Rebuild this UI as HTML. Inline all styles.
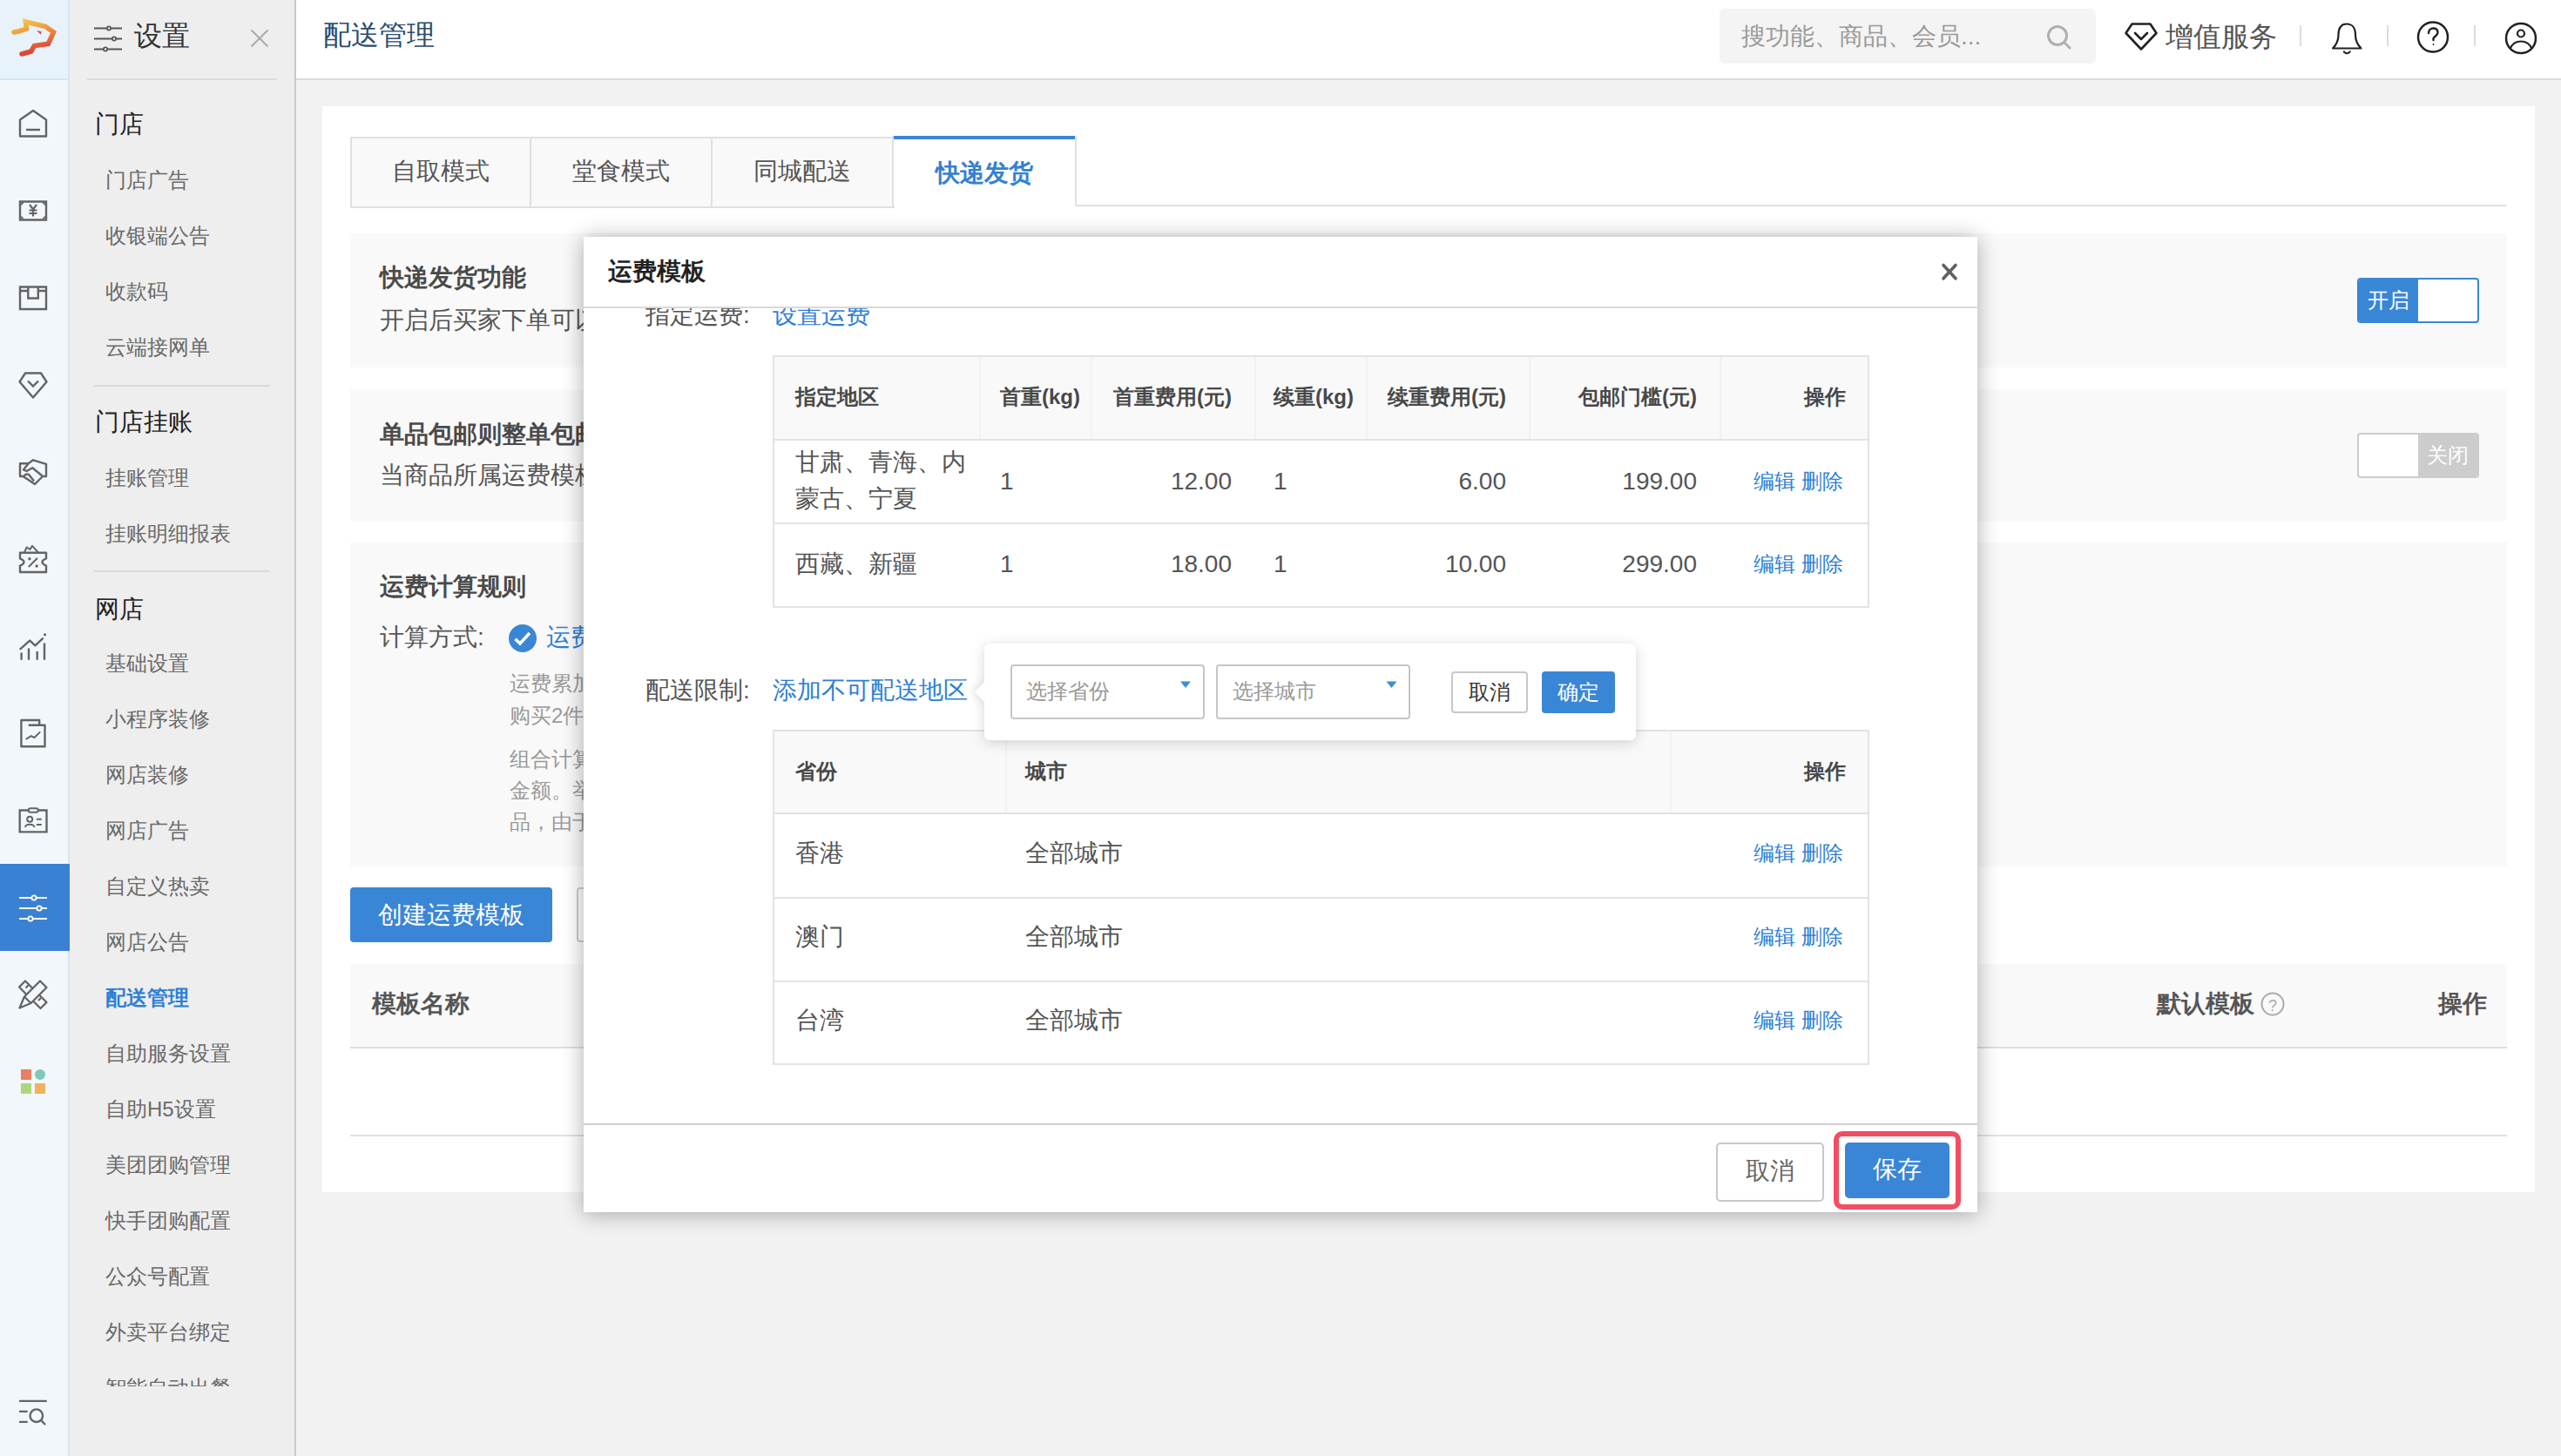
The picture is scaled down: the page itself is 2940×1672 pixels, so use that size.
<!DOCTYPE html>
<html><head><meta charset="utf-8">
<style>
html,body{margin:0;padding:0;}
body{width:2940px;height:1672px;overflow:hidden;background:#f2f2f2;font-family:"Liberation Sans",sans-serif;position:relative;}
.a{position:absolute;white-space:nowrap;}
.f24{font-size:24px;line-height:24px;}
.f28{font-size:28px;line-height:28px;}
.f32{font-size:32px;line-height:32px;}
.b{font-weight:bold;}
.blue{color:#2f7fd6;}
svg{position:absolute;overflow:visible;}
/* rail */
#rail{left:0;top:0;width:78px;height:1672px;background:#f2f7fc;border-right:2px solid #d4e5f5;}
#logo{left:0;top:0;width:78px;height:90px;background:#e7f2fa;border-bottom:2px solid #d4e5f5;}
/* sidebar */
#side{left:80px;top:0;width:258px;height:1672px;background:#eeeeee;border-right:2px solid #c9c9c9;}
.grp{left:109px;color:#222;}
.itm{left:121px;color:#6a6a6a;}
.dv{left:108px;width:202px;height:2px;background:#dadada;}
/* top */
#top{left:340px;top:0;width:2600px;height:90px;background:#fff;border-bottom:2px solid #dcdcdc;}
</style></head><body>
<div id="rail" class="a"></div>
<div id="logo" class="a"></div>
<div id="side" class="a"></div>
<div id="top" class="a"></div>

<svg style="left:0;top:0" width="80" height="92" viewBox="0 0 80 92">
<defs><linearGradient id="lg" x1="0" y1="0" x2="0.3" y2="1"><stop offset="0" stop-color="#f6c846"/><stop offset="0.5" stop-color="#ee8b3c"/><stop offset="1" stop-color="#df4338"/></linearGradient></defs>
<path d="M16 37 C20 36.5 24.5 35 30.5 32.8 L29.3 25 L52 30.3 L61.5 37 L55.3 50.4 L39.4 52.5 L35.6 59 L25 62" fill="none" stroke="url(#lg)" stroke-width="5.6" stroke-linejoin="miter" stroke-miterlimit="6" stroke-linecap="round"/>
<path d="M41.8 34.8 L47.8 36.6 L46.8 39.8 Z" fill="#e8404f"/>
</svg>
<div class="a" style="left:0;top:992px;width:80px;height:100px;background:#3a80d3"></div>
<svg style="left:0;top:0" width="80" height="1672" viewBox="0 0 80 1672" fill="none" stroke="#646464" stroke-width="2.4">
<!-- home -->
<path d="M23 156.5 V137.5 L38 127 L53 137.5 V156.5 Z" stroke-linejoin="round"/><path d="M30 149 H46"/>
<!-- yen bill -->
<path d="M23 231.5 H53 V252.5 H23 Z"/>
<path d="M23 235 A3.5 3.5 0 0 0 26.5 231.5 M49.5 231.5 A3.5 3.5 0 0 0 53 235 M53 249 A3.5 3.5 0 0 0 49.5 252.5 M26.5 252.5 A3.5 3.5 0 0 0 23 249" stroke-width="1.8"/>
<path d="M34 235 L38 240.5 L42 235 M38 240.5 V248.5 M33.5 241.5 H42.5 M33.5 245 H42.5" stroke-width="2.2"/>
<!-- box -->
<path d="M23 329.5 H53 V355 H23 Z M23 334 H32.3 M43.8 334 H53 M32.3 329.5 V342.5 H43.8 V329.5"/>
<!-- diamond -->
<path d="M29 428.5 H47 L53.5 438.5 L38 456.5 L22.5 438.5 Z" stroke-linejoin="round"/><path d="M32 437.5 L38 443.5 L44 437.5"/>
<!-- handshake -->
<path d="M23 532.3 H32.5 L38 528.3 L53 532.8 V547 H49 L40 556 L26.5 547 H23 Z" stroke-linejoin="round"/>
<path d="M32.5 532.3 L27 539.5 L30.5 541 L37.3 537.3 L48.5 546.5" stroke-linejoin="round"/>
<path d="M27.5 546.5 C29 544.5 31 544 33 544.8 L39 552.5" stroke-linejoin="round"/>
<!-- discount ticket -->
<path d="M23 634.8 H53 V641.4 C49.5 643 48.5 644 48.5 645.5 C48.5 647 49.5 648 53 649.7 V657 H23 V649.7 C26.5 648 27.5 647 27.5 645.5 C27.5 644 26.5 643 23 641.4 Z" stroke-linejoin="round"/>
<path d="M28 634 L30.8 628.5 L34.5 631 L37 626.8 L43.5 634" stroke-width="2" stroke-linejoin="round"/>
<path d="M43 640.7 L32.8 651" stroke-width="2"/><circle cx="33.9" cy="641.8" r="1.7" fill="#646464" stroke="none"/><circle cx="42.1" cy="650" r="1.7" fill="#646464" stroke="none"/>
<!-- chart -->
<path d="M24.6 757.7 V749.6 M33 757.7 V744.6 M42.7 757.7 V748 M51 757.7 V738.5"/><path d="M22.7 745.8 L34.2 735.6 L40.4 741.3 L49.6 732.7" stroke-linejoin="round"/><circle cx="51.5" cy="728.8" r="1.6" fill="#646464" stroke="none"/>
<!-- report -->
<path d="M24.4 827 H45.2 V832.7 H51.5 V857.3 H24.4 Z M32.7 832.7 H45.2" stroke-linejoin="round"/><path d="M29.8 849 L35.6 845.2 L39.4 847 L46.2 840.4" stroke-width="2" stroke-linejoin="round"/>
<!-- id card -->
<path d="M22.7 930.5 H53.5 V955.4 H22.7 Z"/><rect x="32.7" y="928.3" width="11.1" height="4.4" rx="2.2" stroke-width="2" fill="#f2f7fc"/><circle cx="34.2" cy="940.8" r="3" stroke-width="2"/><path d="M28.8 950 C30 945.8 38.4 945.8 39.6 950 M41.9 940.8 H47.7 M41.9 947 H47.7" stroke-width="2"/>
<!-- pencil ruler -->
<path d="M29 1126.5 L53.5 1151 L46.5 1158 L22 1133.5 Z" stroke-linejoin="round" stroke-width="2.3"/>
<path d="M29.5 1134.5 L32.5 1131.5 M44 1149 L47 1146" stroke-width="2.2"/>
<path d="M46 1126.5 L53.5 1134 L35.5 1152 L22.5 1157.5 L28 1144.5 Z" fill="#f2f7fc" stroke-linejoin="round" stroke-width="2.3"/>
<path d="M28 1144.5 L35.5 1152" stroke-width="2.2"/>
<!-- search list -->
<path d="M22 1608.9 H53.8 M22 1620.9 H31.7 M22 1632.9 H31.7"/><circle cx="41.8" cy="1625.7" r="7.3"/><path d="M47.2 1631.1 L52 1636"/>
</svg>
<svg style="left:0;top:0" width="80" height="1672" viewBox="0 0 80 1672" fill="none" stroke="#fff" stroke-width="2.2">
<path d="M22 1031 H54 M22 1043 H54 M22 1055 H54"/>
<circle cx="39" cy="1031" r="2.6" fill="#3a80d3" stroke-width="1.8"/><circle cx="45" cy="1043" r="2.6" fill="#3a80d3" stroke-width="1.8"/><circle cx="35" cy="1055" r="2.6" fill="#3a80d3" stroke-width="1.8"/>
</svg>
<div class="a" style="left:24px;top:1228px;width:12px;height:12px;background:#e9805f"></div>
<div class="a" style="left:40px;top:1228px;width:12px;height:12px;background:#7ec9b7;border-radius:50%"></div>
<div class="a" style="left:24px;top:1244px;width:12px;height:12px;background:#acd87c"></div>
<div class="a" style="left:40px;top:1244px;width:12px;height:12px;background:#f1b15e"></div>


<svg style="left:0;top:0" width="340" height="92" viewBox="0 0 340 92" fill="none" stroke="#555" stroke-width="2.5">
<path d="M108 32.5 H140 M108 44.5 H140 M108 56.5 H140" stroke-width="2.2"/>
<circle cx="125" cy="32.5" r="2.1" fill="#eee" stroke-width="1.7"/><circle cx="131" cy="44.5" r="2.1" fill="#eee" stroke-width="1.7"/><circle cx="121" cy="56.5" r="2.1" fill="#eee" stroke-width="1.7"/>
<path d="M288.5 34.5 L307.5 53.5 M307.5 34.5 L288.5 53.5" stroke="#aaa" stroke-width="2"/>
</svg>
<div class="a f32" style="left:154px;top:25px;color:#333">设置</div>
<div class="a dv" style="top:90px;left:100px;width:218px"></div>

<div class="a f28 grp" style="top:129px">门店</div>
<div class="a f28 grp" style="top:471px">门店挂账</div>
<div class="a f28 grp" style="top:686px">网店</div>
<div class="a dv" style="top:442px"></div><div class="a dv" style="top:655px"></div>
<div class="a f24 itm" style="top:195px">门店广告</div>
<div class="a f24 itm" style="top:259px">收银端公告</div>
<div class="a f24 itm" style="top:323px">收款码</div>
<div class="a f24 itm" style="top:387px">云端接网单</div>
<div class="a f24 itm" style="top:537px">挂账管理</div>
<div class="a f24 itm" style="top:601px">挂账明细报表</div>
<div class="a f24 itm" style="top:750px">基础设置</div>
<div class="a f24 itm" style="top:814px">小程序装修</div>
<div class="a f24 itm" style="top:878px">网店装修</div>
<div class="a f24 itm" style="top:942px">网店广告</div>
<div class="a f24 itm" style="top:1006px">自定义热卖</div>
<div class="a f24 itm" style="top:1070px">网店公告</div>
<div class="a f24 itm b" style="top:1134px;color:#2f7fd6">配送管理</div>
<div class="a f24 itm" style="top:1198px">自助服务设置</div>
<div class="a f24 itm" style="top:1262px">自助H5设置</div>
<div class="a f24 itm" style="top:1326px">美团团购管理</div>
<div class="a f24 itm" style="top:1390px">快手团购配置</div>
<div class="a f24 itm" style="top:1454px">公众号配置</div>
<div class="a f24 itm" style="top:1518px">外卖平台绑定</div>
<div class="a" style="left:80px;top:1520px;width:258px;height:72px;overflow:hidden"><div class="a f24 itm" style="left:41px;top:62px">智能自动出餐</div></div>

<div class="a f32" style="left:371px;top:24px;color:#2b4d70">配送管理</div>
<div class="a" style="left:1974px;top:10px;width:432px;height:63px;background:#f4f4f4;border-radius:6px"></div>
<div class="a f28" style="left:1999px;top:28px;color:#9a9a9a">搜功能、商品、会员...</div>
<svg style="left:0;top:0" width="2940" height="92" viewBox="0 0 2940 92" fill="none">
<circle cx="2362" cy="41" r="10.5" stroke="#b0b0b0" stroke-width="3"/><path d="M2370 49 L2376 55" stroke="#b0b0b0" stroke-width="3" stroke-linecap="round"/>
<path d="M2447.5 27.5 H2468.5 L2475.5 38 L2458 56.5 L2440.5 38 Z" stroke="#222" stroke-width="2.6" stroke-linejoin="round"/>
<path d="M2451 38 L2458 45 L2465 38" stroke="#222" stroke-width="2.6" stroke-linecap="round" stroke-linejoin="round"/>
<path d="M2641 29 V53 M2741 29 V53 M2841 29 V53" stroke="#dcdcdc" stroke-width="2"/>
<path d="M2678 55.5 H2710.5 C2706 51 2704 47 2704 40 C2704 32 2700 27.5 2694 27.5 C2688 27.5 2684.5 32 2684.5 40 C2684.5 47 2682.5 51 2678 55.5 Z" stroke="#222" stroke-width="2.2" stroke-linejoin="round"/>
<path d="M2690.5 58.5 C2691.5 62 2697 62 2698 58.5" stroke="#222" stroke-width="2"/>
<circle cx="2793" cy="42.5" r="17" stroke="#222" stroke-width="2.5"/>
<path d="M2788 38 C2788 34.5 2790.5 32.5 2793.5 32.5 C2796.5 32.5 2798.5 34.5 2798.5 37.5 C2798.5 40.5 2795 41.5 2793.5 44 V46" stroke="#222" stroke-width="2.4" stroke-linecap="round"/>
<circle cx="2793.5" cy="51" r="0.9" fill="#222"/>
<circle cx="2894" cy="44" r="17" stroke="#222" stroke-width="2.5"/>
<circle cx="2894" cy="38.5" r="4" stroke="#222" stroke-width="2.2"/>
<path d="M2881.5 56 C2884 50 2888.5 47.5 2894 47.5 C2899.5 47.5 2904 50 2906.5 56" stroke="#222" stroke-width="2.2"/>
</svg>
<div class="a f32" style="left:2486px;top:26px;color:#555">增值服务</div>
<!-- main card -->
<div class="a" style="left:370px;top:122px;width:2540px;height:1247px;background:#fff"></div>

<div class="a" style="left:1233px;top:235px;width:1645px;height:2px;background:#e0e0e0"></div>
<div class="a" style="left:402px;top:157px;width:621px;height:78px;background:#f9f9f9;border:2px solid #e0e0e0"></div>
<div class="a" style="left:608px;top:157px;width:2px;height:80px;background:#e0e0e0"></div>
<div class="a" style="left:816px;top:157px;width:2px;height:80px;background:#e0e0e0"></div>
<div class="a f28" style="left:402px;top:183px;width:207px;text-align:center;color:#555">自取模式</div>
<div class="a f28" style="left:609px;top:183px;width:208px;text-align:center;color:#555">堂食模式</div>
<div class="a f28" style="left:817px;top:183px;width:208px;text-align:center;color:#555">同城配送</div>
<div class="a" style="left:1024px;top:156px;width:208px;height:81px;background:#fff;border-left:2px solid #e0e0e0;border-right:2px solid #e0e0e0"></div>
<div class="a" style="left:1026px;top:156px;width:208px;height:4px;background:#3a86d6"></div>
<div class="a f28 b" style="left:1025px;top:185px;width:210px;text-align:center;color:#3380d5">快递发货</div>

<div class="a" style="left:402px;top:268px;width:2476px;height:154px;background:#f9f9f9"></div>
<div class="a" style="left:402px;top:447px;width:2476px;height:151px;background:#f9f9f9"></div>
<div class="a" style="left:402px;top:623px;width:2476px;height:372px;background:#f9f9f9"></div>
<div class="a f28 b" style="left:436px;top:305px;color:#4a4a4a">快递发货功能</div>
<div class="a f28" style="left:436px;top:354px;color:#555">开启后买家下单可以选择快递发货</div>
<div class="a f28 b" style="left:436px;top:485px;color:#4a4a4a">单品包邮则整单包邮</div>
<div class="a f28" style="left:436px;top:532px;color:#555">当商品所属运费模板设置了包邮</div>
<div class="a f28 b" style="left:436px;top:660px;color:#4a4a4a">运费计算规则</div>
<div class="a f28" style="left:436px;top:718px;color:#555">计算方式:</div>
<svg style="left:0;top:0" width="700" height="800" viewBox="0 0 700 800"><circle cx="600" cy="733" r="16" fill="#3a86d6"/><path d="M591.5 733.8 L597 739 L608 727" fill="none" stroke="#fff" stroke-width="3.5" stroke-linecap="butt" stroke-linejoin="miter"/></svg>
<div class="a f28" style="left:627px;top:718px;color:#2f7fd6">运费累加</div>
<div class="a f24" style="left:585px;top:773px;color:#999">运费累加计算</div>
<div class="a f24" style="left:585px;top:810px;color:#999">购买2件商品</div>
<div class="a f24" style="left:585px;top:860px;color:#999">组合计算运费</div>
<div class="a f24" style="left:585px;top:896px;color:#999">金额。举例</div>
<div class="a f24" style="left:585px;top:932px;color:#999">品，由于</div>
<div class="a" style="left:402px;top:1019px;width:232px;height:63px;background:#3a86d6;border-radius:4px"></div>
<div class="a f28" style="left:402px;top:1037px;width:232px;text-align:center;color:#fff">创建运费模板</div>
<div class="a" style="left:662px;top:1019px;width:200px;height:59px;background:#fff;border:2px solid #ccc;border-radius:4px"></div>
<div class="a" style="left:402px;top:1107px;width:2476px;height:95px;background:#f9f9f9;border-bottom:2px solid #dddddd"></div>
<div class="a f28 b" style="left:427px;top:1139px;color:#555">模板名称</div>
<div class="a f28 b" style="left:2476px;top:1139px;color:#555">默认模板</div>
<svg style="left:0;top:0" width="2940" height="1200" viewBox="0 0 2940 1200"><circle cx="2609" cy="1153" r="12.5" fill="none" stroke="#aaa" stroke-width="2"/><text x="2609" y="1161" text-anchor="middle" font-size="18" font-family="Liberation Sans" fill="#aaa">?</text></svg>
<div class="a f28 b" style="left:2799px;top:1139px;color:#555">操作</div>
<div class="a" style="left:402px;top:1303px;width:2476px;height:2px;background:#e2e2e2"></div>


<div class="a" style="left:2706px;top:319px;width:136px;height:48px;border:2px solid #3a86d6;border-radius:4px;background:#fff;overflow:hidden"><div class="a" style="left:0;top:0;width:68px;height:48px;background:#3a86d6"></div><div class="a f24" style="left:0;top:12px;width:68px;text-align:center;color:#fff">开启</div></div>
<div class="a" style="left:2706px;top:497px;width:136px;height:48px;border:2px solid #cccccc;border-radius:4px;background:#fff;overflow:hidden"><div class="a" style="left:68px;top:0;width:68px;height:48px;background:#cccccc"></div><div class="a f24" style="left:68px;top:12px;width:68px;text-align:center;color:#fff">关闭</div></div>


<!-- modal -->
<div class="a" style="left:670px;top:272px;width:1600px;height:1120px;background:#fff;box-shadow:0 2px 24px rgba(0,0,0,0.32)"></div>
<div class="a f28 b" style="left:698px;top:298px;color:#222">运费模板</div>
<svg style="left:0;top:0" width="2300" height="400" viewBox="0 0 2300 400"><path d="M2231 304.5 L2245 319.8 M2245 304.5 L2231 319.8" stroke="#606060" stroke-width="3.6" stroke-linecap="round"/></svg>
<div class="a" style="left:670px;top:352px;width:1600px;height:2px;background:#d9d9d9"></div>
<div class="a" style="left:670px;top:354px;width:1600px;height:936px;overflow:hidden">
  <div class="a f28" style="left:71px;top:-6px;color:#555">指定运费:</div>
  <div class="a f28" style="left:217px;top:-6px;color:#2f7fd6">设置运费</div>
</div>

<div class="a" style="left:887px;top:408px;width:1255px;height:286px;border:2px solid #e3e3e3;background:#fff"></div>
<div class="a" style="left:889px;top:410px;width:1255px;height:94px;background:#f9f9f9;border-bottom:2px solid #e3e3e3"></div>
<div class="a" style="left:1124px;top:410px;width:2px;height:94px;background:#f2f2f2"></div>
<div class="a" style="left:1252px;top:410px;width:2px;height:94px;background:#f2f2f2"></div>
<div class="a" style="left:1440px;top:410px;width:2px;height:94px;background:#f2f2f2"></div>
<div class="a" style="left:1568px;top:410px;width:2px;height:94px;background:#f2f2f2"></div>
<div class="a" style="left:1755px;top:410px;width:2px;height:94px;background:#f2f2f2"></div>
<div class="a" style="left:1974px;top:410px;width:2px;height:94px;background:#f2f2f2"></div>
<div class="a" style="left:889px;top:600px;width:1255px;height:2px;background:#e3e3e3"></div>
<div class="a f24 b" style="left:913px;top:444px;color:#484848">指定地区</div>
<div class="a f24 b" style="left:1148px;top:444px;color:#484848">首重(kg)</div>
<div class="a f24 b" style="left:1014px;width:400px;text-align:right;top:444px;color:#484848">首重费用(元)</div>
<div class="a f24 b" style="left:1462px;top:444px;color:#484848">续重(kg)</div>
<div class="a f24 b" style="left:1329px;width:400px;text-align:right;top:444px;color:#484848">续重费用(元)</div>
<div class="a f24 b" style="left:1548px;width:400px;text-align:right;top:444px;color:#484848">包邮门槛(元)</div>
<div class="a f24 b" style="left:1719px;width:400px;text-align:right;top:444px;color:#484848">操作</div>
<div class="a f28" style="left:913px;top:510px;color:#555;line-height:42px;white-space:normal;width:200px">甘肃、青海、内<br>蒙古、宁夏</div>
<div class="a f28" style="left:1148px;top:539px;color:#555">1</div>
<div class="a f28" style="left:1014px;width:400px;text-align:right;top:539px;color:#555">12.00</div>
<div class="a f28" style="left:1462px;top:539px;color:#555">1</div>
<div class="a f28" style="left:1329px;width:400px;text-align:right;top:539px;color:#555">6.00</div>
<div class="a f28" style="left:1548px;width:400px;text-align:right;top:539px;color:#555">199.00</div>
<div class="a f24" style="left:1716px;width:400px;text-align:right;top:541px;color:#2f7fd6">编辑 删除</div>
<div class="a f28" style="left:1148px;top:634px;color:#555">1</div>
<div class="a f28" style="left:1014px;width:400px;text-align:right;top:634px;color:#555">18.00</div>
<div class="a f28" style="left:1462px;top:634px;color:#555">1</div>
<div class="a f28" style="left:1329px;width:400px;text-align:right;top:634px;color:#555">10.00</div>
<div class="a f28" style="left:1548px;width:400px;text-align:right;top:634px;color:#555">299.00</div>
<div class="a f24" style="left:1716px;width:400px;text-align:right;top:636px;color:#2f7fd6">编辑 删除</div>
<div class="a f28" style="left:913px;top:634px;color:#555">西藏、新疆</div>

<div class="a f28" style="left:741px;top:779px;color:#555">配送限制:</div>
<div class="a f28" style="left:887px;top:779px;color:#2f7fd6">添加不可配送地区</div>

<div class="a" style="left:887px;top:838px;width:1255px;height:381px;border:2px solid #e3e3e3;background:#fff"></div>
<div class="a" style="left:889px;top:840px;width:1255px;height:93px;background:#f9f9f9;border-bottom:2px solid #e3e3e3"></div>
<div class="a" style="left:1154px;top:840px;width:2px;height:93px;background:#f2f2f2"></div>
<div class="a" style="left:1917px;top:840px;width:2px;height:93px;background:#f2f2f2"></div>
<div class="a" style="left:889px;top:1030px;width:1255px;height:2px;background:#e3e3e3"></div>
<div class="a" style="left:889px;top:1126px;width:1255px;height:2px;background:#e3e3e3"></div>
<div class="a f24 b" style="left:913px;top:874px;color:#484848">省份</div>
<div class="a f24 b" style="left:1177px;top:874px;color:#484848">城市</div>
<div class="a f24 b" style="left:1719px;width:400px;text-align:right;top:874px;color:#484848">操作</div>
<div class="a f28" style="left:913px;top:966px;color:#555">香港</div>
<div class="a f28" style="left:1177px;top:966px;color:#555">全部城市</div>
<div class="a f24" style="left:1716px;width:400px;text-align:right;top:968px;color:#2f7fd6">编辑 删除</div>
<div class="a f28" style="left:913px;top:1062px;color:#555">澳门</div>
<div class="a f28" style="left:1177px;top:1062px;color:#555">全部城市</div>
<div class="a f24" style="left:1716px;width:400px;text-align:right;top:1064px;color:#2f7fd6">编辑 删除</div>
<div class="a f28" style="left:913px;top:1158px;color:#555">台湾</div>
<div class="a f28" style="left:1177px;top:1158px;color:#555">全部城市</div>
<div class="a f24" style="left:1716px;width:400px;text-align:right;top:1160px;color:#2f7fd6">编辑 删除</div>

<div class="a" style="left:1130px;top:739px;width:748px;height:111px;background:#fff;border-radius:6px;box-shadow:0 3px 16px rgba(0,0,0,0.17)"></div>
<div class="a" style="left:1121.5px;top:785.5px;width:17px;height:17px;background:#fff;transform:rotate(45deg);box-shadow:-2px 2px 8px rgba(0,0,0,0.10)"></div>
<div class="a" style="left:1130px;top:770px;width:24px;height:50px;background:#fff"></div>
<div class="a" style="left:1160px;top:763px;width:219px;height:59px;border:2px solid #c6c6c6;border-radius:4px;background:#fff"></div>
<div class="a f24" style="left:1178px;top:782px;color:#999">选择省份</div>
<div class="a" style="left:1396px;top:763px;width:219px;height:59px;border:2px solid #c6c6c6;border-radius:4px;background:#fff"></div>
<div class="a f24" style="left:1415px;top:782px;color:#999">选择城市</div>
<svg style="left:0;top:0" width="1700" height="900" viewBox="0 0 1700 900"><path d="M1355 782.5 H1367 L1361 790 Z M1591.5 782.5 H1603.5 L1597.5 790 Z" fill="#3d8fcf"/></svg>
<div class="a" style="left:1666px;top:771px;width:84px;height:44px;border:2px solid #c8c8c8;border-radius:4px;background:#fff"></div>
<div class="a f24" style="left:1666px;top:783px;width:88px;text-align:center;color:#333">取消</div>
<div class="a" style="left:1770px;top:771px;width:84px;height:48px;border-radius:4px;background:#3a86d6"></div>
<div class="a f24" style="left:1770px;top:783px;width:84px;text-align:center;color:#fff">确定</div>


<div class="a" style="left:670px;top:1290px;width:1600px;height:2px;background:#d0d0d0"></div>
<div class="a" style="left:1970px;top:1312px;width:120px;height:64px;border:2px solid #c8c8c8;border-radius:5px;background:#fff"></div>
<div class="a f28" style="left:1970px;top:1331px;width:124px;text-align:center;color:#666">取消</div>
<div class="a" style="left:2118px;top:1312px;width:120px;height:64px;border-radius:5px;background:#3a86d6"></div>
<div class="a f28" style="left:2118px;top:1329px;width:120px;text-align:center;color:#fff">保存</div>
<div class="a" style="left:2105px;top:1299px;width:134px;height:78px;border:6px solid #f24d62;border-radius:10px"></div>

</body></html>
